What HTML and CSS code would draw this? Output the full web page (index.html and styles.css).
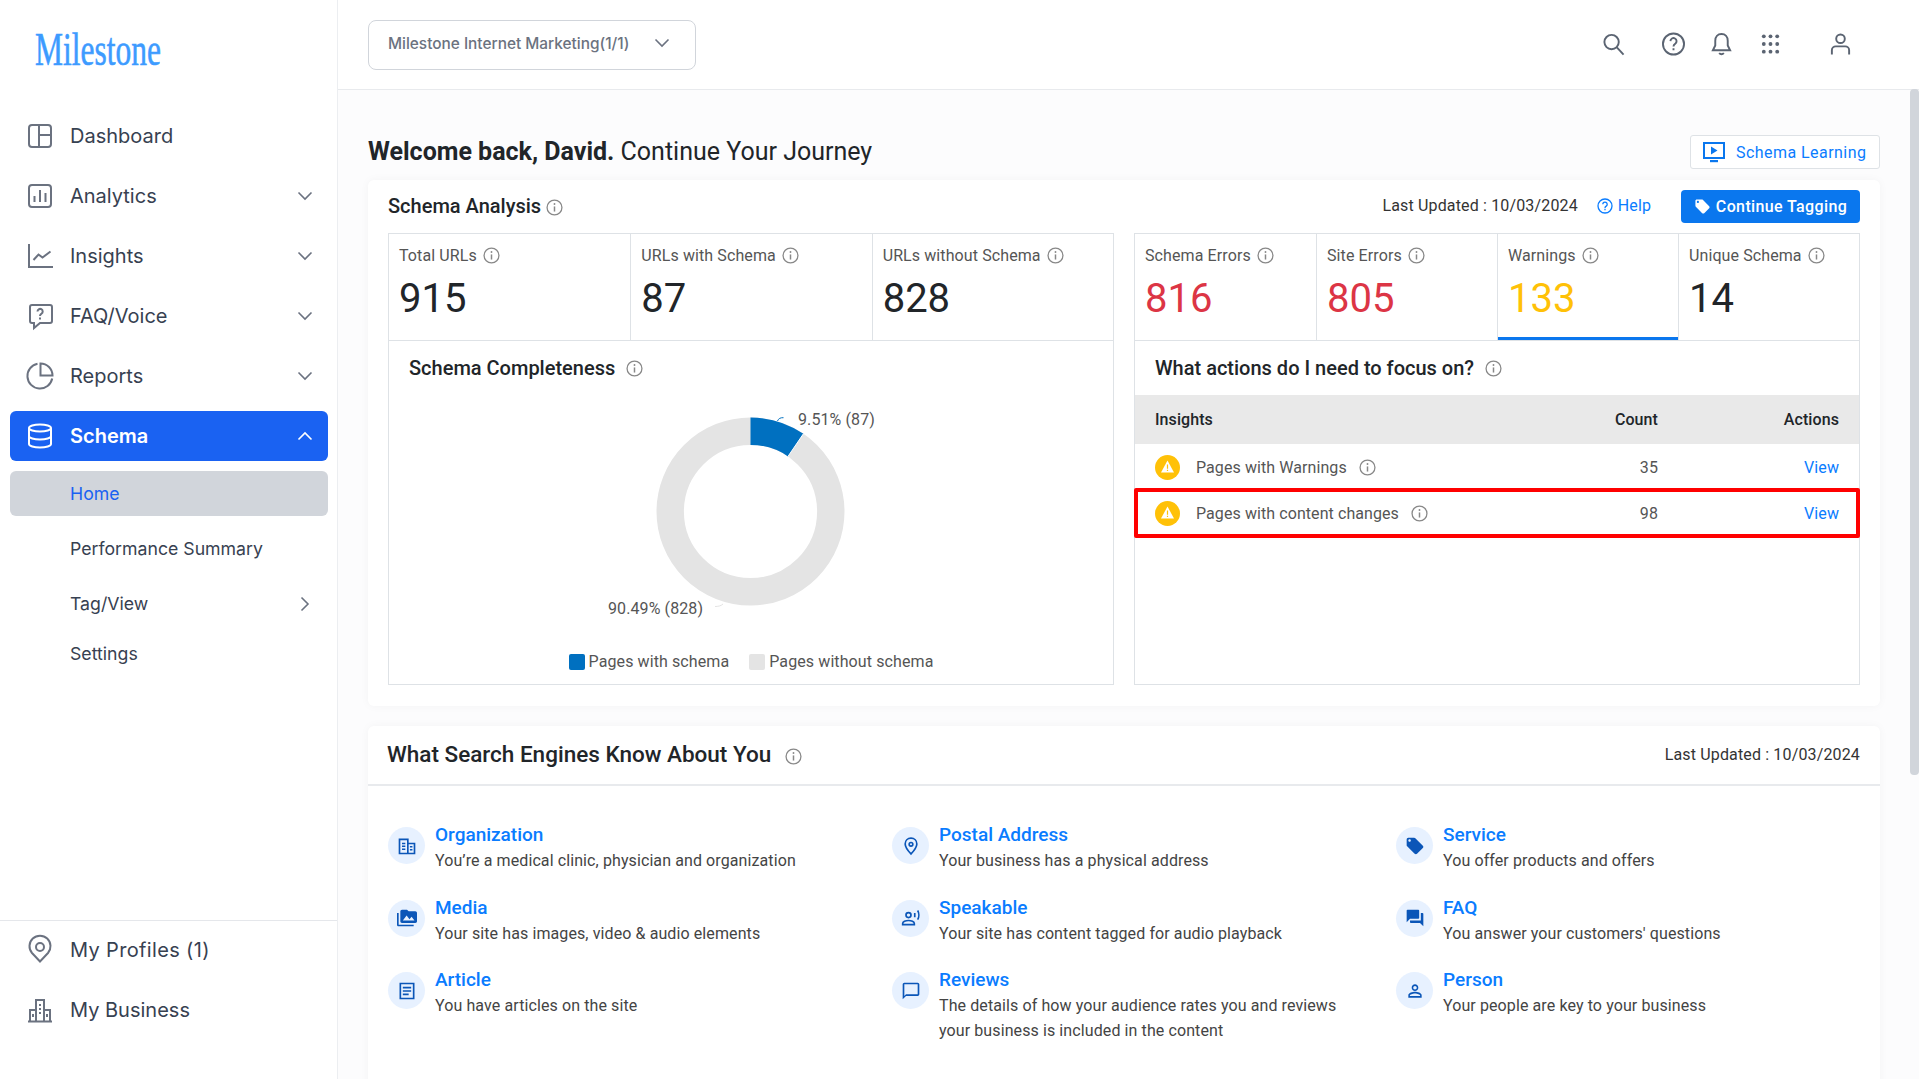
FILE: index.html
```html
<!DOCTYPE html>
<html lang="en">
<head>
    <meta charset="UTF-8">
    <meta name="viewport" content="width=device-width, initial-scale=1.0">
    <title>Milestone Schema Home</title>
    <link rel="stylesheet" href="styles.css">
</head>
<body>
    <svg class="sprite">
        <symbol id="info" viewBox="0 0 16 16">
            <circle cx="8" cy="8" r="7" fill="none" stroke="currentColor" stroke-width="1.2"/>
            <path d="M8 7v4.8" stroke="currentColor" stroke-width="1.4" fill="none"/>
            <circle cx="8" cy="4.7" r=".9" fill="currentColor"/>
        </symbol>
        <symbol id="chev" viewBox="0 0 16 16">
            <path d="M1.5 4.5 8 11l6.5-6.5" fill="none" stroke="currentColor" stroke-width="1.6"/>
        </symbol>
        <symbol id="warn" viewBox="0 0 25 25">
            <circle cx="12.5" cy="12.5" r="12.5" fill="#ffc107"/>
            <path d="M12.5 5.5 19 17.5H6z" fill="#fff"/>
            <path d="M12.5 9.5v4.2M12.5 14.8v1.3" stroke="#ffc107" stroke-width="1.2"/>
        </symbol>
        <symbol id="tag" viewBox="0 0 24 24">
            <path d="M21.41 11.58l-9-9C12.05 2.22 11.55 2 11 2H4c-1.1 0-2 .9-2 2v7c0 .55.22 1.05.59 1.42l9 9c.36.36.86.58 1.41.58.55 0 1.05-.22 1.41-.59l7-7c.37-.36.59-.86.59-1.41 0-.55-.23-1.06-.59-1.42zM5.5 7C4.67 7 4 6.33 4 5.5S4.67 4 5.5 4 7 4.67 7 5.5 6.33 7 5.5 7z" fill="currentColor"/>
        </symbol>
    </svg>

    <aside class="sidebar">
        <div class="logo"><span class="logo-text">Milestone</span></div>
        <nav class="nav">
            <a class="nav-item">
                <svg class="nav-icon" viewBox="0 0 26 26"><rect x="2" y="2" width="22" height="22" rx="3"/><path d="M12 2v22M12 12h12"/></svg>
                <span>Dashboard</span>
            </a>
            <a class="nav-item">
                <svg class="nav-icon" viewBox="0 0 26 26"><rect x="2" y="2" width="22" height="22" rx="3"/><path d="M7.5 19v-6M13 19V7M18.500 19v-9"/></svg>
                <span>Analytics</span>
                <svg class="chev"><use href="#chev"/></svg>
            </a>
            <a class="nav-item">
                <svg class="nav-icon" viewBox="0 0 26 26"><path d="M2 1v23h24M6.500 17l5-5.500 4 3 8-6"/></svg>
                <span>Insights</span>
                <svg class="chev"><use href="#chev"/></svg>
            </a>
            <a class="nav-item">
                <svg class="nav-icon" viewBox="0 0 26 26"><path d="M5 2h18a2 2 0 0 1 2 2v14a2 2 0 0 1-2 2H13l-6 5v-5H5a2 2 0 0 1-2-2V4a2 2 0 0 1 2-2z"/><path d="M10.500 8.500a2.600 2.600 0 1 1 4 2.200c-1 .6-1.500 1-1.500 2.300M13 14.500v2"/></svg>
                <span>FAQ/Voice</span>
                <svg class="chev"><use href="#chev"/></svg>
            </a>
            <a class="nav-item">
                <svg class="nav-icon nav-icon-wide" viewBox="0 0 26 26"><path d="M10.500.8A12.500 12.500 0 1 0 25.200 15.500"/><path d="M13.500.5v12h12A12 12 0 0 0 13.500.5z"/></svg>
                <span>Reports</span>
                <svg class="chev"><use href="#chev"/></svg>
            </a>
            <a class="nav-item nav-active">
                <svg class="nav-icon" viewBox="0 0 26 26"><ellipse cx="13" cy="5" rx="11" ry="3.500"/><path d="M2 5v16c0 2 5 3.500 11 3.500S24 23 24 21V5M2 13c0 2 5 3.500 11 3.500S24 15 24 13"/></svg>
                <span>Schema</span>
                <svg class="chev chev-up"><use href="#chev"/></svg>
            </a>
            <a class="sub-item sub-active">Home</a>
            <a class="sub-item">Performance Summary</a>
            <a class="sub-item sub-tight">Tag/View
                <svg class="chev chev-right"><use href="#chev"/></svg>
            </a>
            <a class="sub-item">Settings</a>
        </nav>
        <div class="nav-foot">
            <a class="nav-item">
                <svg class="nav-icon" viewBox="0 0 26 26"><path d="M13 24.500 5 16A10.500 10.500 0 1 1 21 16z"/><circle cx="13" cy="10" r="4"/></svg>
                <span class="spaced">My Profiles (1)</span>
            </a>
            <a class="nav-item">
                <svg class="nav-icon" viewBox="0 0 26 26"><path d="M1 24.500h24M3 24V13h6M23 24V13h-6M9 24V3h8v21M12 8h2M12 12h2M12 16h2M6 17v3M20 17v3"/></svg>
                <span>My Business</span>
            </a>
        </div>
    </aside>

    <main class="main">
        <header class="topbar">
            <div class="account-select">
                <span>Milestone Internet Marketing(1/1)</span>
                <svg class="chev"><use href="#chev"/></svg>
            </div>
            <div class="top-icons">
                <svg class="top-icon gap-after" viewBox="0 0 24 24"><circle cx="10" cy="10" r="7.500"/><path d="M15.500 15.500 22.500 23"/></svg>
                <svg class="top-icon" viewBox="0 0 24 24"><circle cx="12" cy="12" r="11"/><path d="M8.800 9a3.200 3.200 0 1 1 5 2.700c-1.200.8-1.800 1.300-1.800 2.800M12 16.500v2"/></svg>
                <svg class="top-icon" viewBox="0 0 24 24"><path d="M12 1.500c-4 0-6.500 3-6.500 7v5L3 18.500h18l-2.500-5v-5c0-4-2.500-7-6.500-7zM9.500 21.500c1.500 1.500 3.500 1.500 5 0"/></svg>
                <svg class="top-icon grid-icon gap-after-wide" viewBox="0 0 24 24">
                    <circle cx="5" cy="4" r="2"/><circle cx="12" cy="4" r="2"/><circle cx="19" cy="4" r="2"/>
                    <circle cx="5" cy="12" r="2"/><circle cx="12" cy="12" r="2"/><circle cx="19" cy="12" r="2"/>
                    <circle cx="5" cy="20" r="2"/><circle cx="12" cy="20" r="2"/><circle cx="19" cy="20" r="2"/>
                </svg>
                <svg class="top-icon" viewBox="0 0 24 24"><circle cx="12" cy="6.500" r="4.500"/><path d="M3 23v-4.500c0-2.500 2-4 4-4h10c2 0 4 1.500 4 4V23"/></svg>
            </div>
        </header>

        <div class="content">
            <div class="welcome-row">
                <h1 class="welcome"><b>Welcome back, David.</b> Continue Your Journey</h1>
                <a class="learn-btn">
                    <svg class="learn-icon" viewBox="0 0 22 22"><path d="M1 2h20v15H1z" fill="none" stroke="currentColor" stroke-width="2"/><path d="M8 5.500v8l6.500-4z" fill="currentColor"/><path d="M7 19h8v2.200H7z" fill="currentColor"/></svg>
                    Schema Learning
                </a>
            </div>

            <section class="card">
                <div class="card-head">
                    <h2 class="card-title">Schema Analysis <svg class="info"><use href="#info"/></svg></h2>
                    <span class="updated">Last Updated : 10/03/2024</span>
                    <a class="help">
                        <svg class="help-icon" viewBox="0 0 16 16"><circle cx="8" cy="8" r="7" fill="none" stroke="currentColor" stroke-width="1.300"/><path d="M5.800 6.300a2.200 2.200 0 1 1 3.400 1.800c-.8.500-1.200.9-1.200 1.800M8 10.800v1.500" fill="none" stroke="currentColor" stroke-width="1.300"/></svg>
                        Help
                    </a>
                    <a class="tag-btn"><svg class="tag-icon"><use href="#tag"/></svg>Continue Tagging</a>
                </div>

                <div class="analysis">
                    <div class="analysis-col">
                        <div class="stats">
                            <div class="stat">
                                <div class="stat-label">Total URLs <svg class="info"><use href="#info"/></svg></div>
                                <div class="stat-num">915</div>
                            </div>
                            <div class="stat">
                                <div class="stat-label">URLs with Schema <svg class="info"><use href="#info"/></svg></div>
                                <div class="stat-num">87</div>
                            </div>
                            <div class="stat">
                                <div class="stat-label">URLs without Schema <svg class="info"><use href="#info"/></svg></div>
                                <div class="stat-num">828</div>
                            </div>
                        </div>
                        <div class="panel">
                            <h3 class="panel-title panel-title-chart">Schema Completeness <svg class="info"><use href="#info"/></svg></h3>
                            <svg class="donut" viewBox="389 395 724 245">
                                <circle cx="750.500" cy="511.500" r="80.300" fill="none" stroke="#e4e4e4" stroke-width="27.400"/>
                                <path d="M750.500 417.500A94 94 0 0 1 803.400 433.800L788 456.400A66.600 66.600 0 0 0 750.500 444.900Z" fill="#0070c0"/>
                                <path d="M803.400 433.800 788 456.400" stroke="#fff" stroke-width="1"/>
                                <path d="M777.500 421c1-2.500 3-3.500 6-3.300" fill="none" stroke="#0070c0"/>
                                <path d="M715 606.500c3 0 6-.5 8-2.500" fill="none" stroke="#e4e4e4"/>
                                <text class="donut-label" x="798" y="425">9.51% (87)</text>
                                <text class="donut-label" x="608" y="614">90.49% (828)</text>
                            </svg>
                            <div class="legend">
                                <span class="legend-item"><i class="swatch swatch-blue"></i>Pages with schema</span>
                                <span class="legend-item"><i class="swatch swatch-grey"></i>Pages without schema</span>
                            </div>
                        </div>
                    </div>

                    <div class="analysis-col">
                        <div class="stats stats-four">
                            <div class="stat">
                                <div class="stat-label">Schema Errors <svg class="info"><use href="#info"/></svg></div>
                                <div class="stat-num num-red">816</div>
                            </div>
                            <div class="stat">
                                <div class="stat-label">Site Errors <svg class="info"><use href="#info"/></svg></div>
                                <div class="stat-num num-red">805</div>
                            </div>
                            <div class="stat stat-active">
                                <div class="stat-label">Warnings <svg class="info"><use href="#info"/></svg></div>
                                <div class="stat-num num-amber">133</div>
                            </div>
                            <div class="stat">
                                <div class="stat-label">Unique Schema <svg class="info"><use href="#info"/></svg></div>
                                <div class="stat-num">14</div>
                            </div>
                        </div>
                        <div class="panel">
                            <h3 class="panel-title">What actions do I need to focus on? <svg class="info"><use href="#info"/></svg></h3>
                            <div class="act-row act-head">
                                <span>Insights</span>
                                <span class="act-count">Count</span>
                                <span class="act-link-col">Actions</span>
                            </div>
                            <div class="act-row act-plain">
                                <span class="act-name"><svg class="warn"><use href="#warn"/></svg>Pages with Warnings <svg class="info"><use href="#info"/></svg></span>
                                <span class="act-count">35</span>
                                <a class="act-link-col view">View</a>
                            </div>
                            <div class="act-row act-marked">
                                <span class="act-name"><svg class="warn"><use href="#warn"/></svg>Pages with content changes <svg class="info"><use href="#info"/></svg></span>
                                <span class="act-count">98</span>
                                <a class="act-link-col view">View</a>
                            </div>
                        </div>
                    </div>
                </div>
            </section>

            <section class="card card-know">
                <div class="know-head">
                    <h2 class="know-title">What Search Engines Know About You <svg class="info"><use href="#info"/></svg></h2>
                    <span class="updated">Last Updated : 10/03/2024</span>
                </div>
                <div class="know-grid">
                    <div class="know-item">
                        <span class="know-icon"><svg viewBox="0 0 24 24"><path d="M3 4h10v17H3zM13 9h8v12h-8z" fill="none" stroke="currentColor" stroke-width="2"/><path d="M6 8h4v1.800H6zM6 11.500h4v1.800H6zM6 15h4v1.800H6zM15.500 12h3v1.800h-3zM15.500 15.500h3v1.800h-3z" fill="currentColor"/></svg></span>
                        <div><a class="know-name">Organization</a><p class="know-desc">You’re a medical clinic, physician and organization</p></div>
                    </div>
                    <div class="know-item">
                        <span class="know-icon"><svg viewBox="0 0 24 24"><circle cx="12" cy="10" r="2.200" fill="none" stroke="currentColor" stroke-width="2"/><path d="M12 2.500c-4 0-7 3-7 7 0 4.500 7 12 7 12s7-7.500 7-12c0-4-3-7-7-7z" fill="none" stroke="currentColor" stroke-width="2"/></svg></span>
                        <div><a class="know-name">Postal Address</a><p class="know-desc">Your business has a physical address</p></div>
                    </div>
                    <div class="know-item">
                        <span class="know-icon"><svg><use href="#tag"/></svg></span>
                        <div><a class="know-name">Service</a><p class="know-desc">You offer products and offers</p></div>
                    </div>

                    <div class="know-item">
                        <span class="know-icon"><svg viewBox="0 0 24 24"><path d="M2 6H0v5h.01L0 20c0 1.100.9 2 2 2h18v-2H2V6zm20-2h-8l-2-2H6c-1.100 0-1.990.9-1.990 2L4 16c0 1.100.9 2 2 2h16c1.100 0 2-.9 2-2V6c0-1.100-.9-2-2-2zM7 15l4.500-6 3.500 4.510 2.500-3.010L21 15H7z" fill="currentColor"/></svg></span>
                        <div><a class="know-name">Media</a><p class="know-desc">Your site has images, video &amp; audio elements</p></div>
                    </div>
                    <div class="know-item">
                        <span class="know-icon"><svg viewBox="0 0 24 24"><circle cx="9" cy="8.500" r="3" fill="none" stroke="currentColor" stroke-width="2"/><path d="M2 20v-1.500c0-2 3.500-3.500 7-3.500s7 1.500 7 3.500V20z" fill="none" stroke="currentColor" stroke-width="2"/><path d="M16.500 6v5M20 3c1.800 3 1.800 8 0 11" fill="none" stroke="currentColor" stroke-width="2"/></svg></span>
                        <div><a class="know-name">Speakable</a><p class="know-desc">Your site has content tagged for audio playback</p></div>
                    </div>
                    <div class="know-item">
                        <span class="know-icon"><svg viewBox="0 0 24 24"><path d="M21 6h-2v9H6v2c0 .55.45 1 1 1h11l4 4V7c0-.55-.45-1-1-1zm-4 6V3c0-.55-.45-1-1-1H3c-.55 0-1 .45-1 1v14l4-4h10c.55 0 1-.45 1-1z" fill="currentColor"/></svg></span>
                        <div><a class="know-name">FAQ</a><p class="know-desc">You answer your customers' questions</p></div>
                    </div>

                    <div class="know-item">
                        <span class="know-icon"><svg viewBox="0 0 24 24"><path d="M4 3h16v18H4z" fill="none" stroke="currentColor" stroke-width="2"/><path d="M7 7h10v2H7zM7 11h10v2H7zM7 15h7v2H7z" fill="currentColor"/></svg></span>
                        <div><a class="know-name">Article</a><p class="know-desc">You have articles on the site</p></div>
                    </div>
                    <div class="know-item">
                        <span class="know-icon"><svg viewBox="0 0 24 24"><path d="M20 2H4c-1.100 0-2 .9-2 2v18l4-4h14c1.100 0 2-.9 2-2V4c0-1.100-.9-2-2-2zm0 14H6l-2 2V4h16v12z" fill="currentColor"/></svg></span>
                        <div><a class="know-name">Reviews</a><p class="know-desc">The details of how your audience rates you and reviews your business is included in the content</p></div>
                    </div>
                    <div class="know-item">
                        <span class="know-icon"><svg viewBox="0 0 24 24"><path d="M12 5.900c1.160 0 2.100.94 2.100 2.100s-.94 2.100-2.100 2.100S9.900 9.160 9.900 8s.94-2.100 2.100-2.100m0 9c2.970 0 6.100 1.460 6.100 2.100v1.100H5.900V17c0-.64 3.130-2.100 6.100-2.100M12 4C9.790 4 8 5.790 8 8s1.790 4 4 4 4-1.790 4-4-1.790-4-4-4zm0 9c-2.670 0-8 1.340-8 4v3h16v-3c0-2.660-5.330-4-8-4z" fill="currentColor"/></svg></span>
                        <div><a class="know-name">Person</a><p class="know-desc">Your people are key to your business</p></div>
                    </div>
                </div>
            </section>
        </div>
        <div class="scroll-thumb"></div>
    </main>
</body>
</html>
```

FILE: styles.css
```css
* {
    box-sizing: border-box;
}
html, body {
    height: 100%;
}
body {
    margin: 0;
    display: flex;
    overflow: hidden;
    background: #fff;
    font-family: Roboto, "Liberation Sans", sans-serif;
    color: #212529;
}
h1, h2, h3, p {
    margin: 0;
    font-weight: inherit;
}
.sprite {
    display: none;
}

/* sidebar */
.sidebar {
    width: 338px;
    flex: none;
    display: flex;
    flex-direction: column;
    border-right: 1px solid #eceef1;
    font-family: Inter, "Liberation Sans", sans-serif;
}
.logo {
    height: 111px;
    padding: 22px 0 0 35px;
}
.logo-text {
    display: inline-block;
    font-family: "Liberation Serif", serif;
    font-size: 47px;
    line-height: 54px;
    color: #3d9bff;
    -webkit-text-stroke: .6px #3d9bff;
    transform: scaleX(.67);
    transform-origin: left center;
}
.nav {
    padding: 0 9px 0 10px;
}
.nav-item {
    display: flex;
    align-items: center;
    height: 50px;
    margin-bottom: 10px;
    padding: 0 15px 0 17px;
    border-radius: 6px;
    font-size: 20px;
    color: #374151;
}
.nav-icon {
    width: 26px;
    height: 26px;
    margin-right: 17px;
    flex: none;
    overflow: visible;
    fill: none;
    stroke: #6b7280;
    stroke-width: 2;
}
.chev {
    width: 16px;
    height: 16px;
    margin-left: auto;
    color: #6b7280;
}
.chev-up {
    color: #fff;
    transform: rotate(180deg);
}
.chev-right {
    transform: rotate(-90deg);
}
.spaced {
    letter-spacing: .35px;
}
.nav-active {
    background: #1a62f2;
    color: #fff;
    font-weight: 600;
}
.nav-active .nav-icon {
    stroke: #fff;
}
.sub-item {
    display: flex;
    align-items: center;
    height: 45px;
    margin-bottom: 10px;
    padding: 0 15px 0 60px;
    border-radius: 6px;
    font-size: 17.7px;
    color: #374151;
}
.sub-tight {
    margin-bottom: 5px;
}
.sub-active {
    background: #d1d5db;
    color: #1a62f2;
}
.nav-foot {
    margin-top: auto;
    padding: 4px 9px 34px 10px;
    border-top: 1px solid #e5e7eb;
}

/* top bar */
.main {
    flex: 1;
    min-width: 0;
    position: relative;
    display: flex;
    flex-direction: column;
}
.topbar {
    height: 90px;
    flex: none;
    display: flex;
    align-items: center;
    padding: 0 67px 0 30px;
    border-bottom: 1px solid #e8eaed;
}
.account-select {
    width: 328px;
    height: 50px;
    display: flex;
    align-items: center;
    padding: 0 25px 3px 19px;
    border: 1px solid #d1d5db;
    border-radius: 8px;
    font-family: Inter, "Liberation Sans", sans-serif;
    font-size: 15.4px;
    font-weight: 500;
    color: #6b7280;
}
.top-icons {
    margin: -2px 0 0 auto;
    display: flex;
    gap: 25px;
}
.top-icon {
    width: 23px;
    height: 24px;
    fill: none;
    stroke: #5b6472;
    stroke-width: 2;
}
.grid-icon {
    stroke: none;
    fill: #5b6472;
    margin-left: 1px;
}
.gap-after {
    margin-right: 12px;
}
.gap-after-wide {
    margin-right: 22px;
}

/* content */
.content {
    flex: 1;
    padding: 45px 39px 0 30px;
    background: #fcfcfd;
}
.welcome-row {
    display: flex;
    align-items: center;
    justify-content: space-between;
    height: 34px;
    margin-bottom: 11px;
}
.welcome {
    margin-top: -2px;
    font-size: 25px;
    color: #212529;
}
.welcome b {
    font-weight: 700;
}
.learn-btn {
    width: 190px;
    height: 34px;
    display: flex;
    align-items: center;
    gap: 11px;
    padding-left: 12px;
    background: #fff;
    border: 1px solid #dee2e6;
    border-radius: 3px;
    font-size: 16px;
    letter-spacing: .45px;
    color: #0a7cff;
}
.learn-icon {
    width: 22px;
    height: 22px;
    color: #0a77ee;
}
.info {
    width: 17px;
    height: 17px;
    margin-left: 2px;
    vertical-align: -3px;
    color: #888;
}
.card-title .info {
    margin-left: 0;
}
.card {
    padding: 10px 20px 21px;
    margin-bottom: 20px;
    background: #fff;
    border-radius: 6px;
    box-shadow: 0 0 10px rgba(0,0,0,.04);
}
.card-head {
    display: flex;
    align-items: center;
    height: 33px;
    margin-bottom: 10px;
}
.card-title {
    margin: -2px auto 0 0;
    font-size: 20px;
    font-weight: 500;
}
.updated {
    margin-top: -2px;
    font-size: 16px;
    letter-spacing: .15px;
    color: #333;
}
.help {
    display: flex;
    align-items: center;
    gap: 5px;
    margin: -2px 30px 0 19px;
    font-size: 16px;
    letter-spacing: .1px;
    color: #0a7cff;
}
.help-icon {
    width: 16px;
    height: 16px;
}
.tag-btn {
    width: 179px;
    height: 33px;
    display: flex;
    align-items: center;
    justify-content: center;
    gap: 5px;
    background: #0a77ee;
    border-radius: 4px;
    font-size: 16px;
    font-weight: 500;
    letter-spacing: .37px;
    color: #fff;
}
.tag-icon {
    width: 17px;
    height: 17px;
    color: #fff;
}
.analysis {
    display: grid;
    grid-template-columns: 1fr 1fr;
    gap: 20px;
}
.stats {
    display: grid;
    grid-template-columns: repeat(3, 1fr);
    height: 108px;
    border: 1px solid #dee2e6;
}
.stats-four {
    grid-template-columns: repeat(4, 1fr);
}
.stat {
    padding: 12px 10px 0;
    border-left: 1px solid #dee2e6;
}
.stat:first-child {
    border-left: none;
}
.stat-active {
    box-shadow: inset 0 -3px 0 #0a77ee;
}
.stat-label {
    font-size: 16px;
    line-height: 20px;
    letter-spacing: .1px;
    color: #555;
}
.stat-num {
    margin-top: 9px;
    font-size: 40px;
    line-height: 48px;
}
.num-red {
    color: #dc3545;
}
.num-amber {
    color: #ffc107;
}
.panel {
    height: 344px;
    border: 1px solid #dee2e6;
    border-top: none;
}
.panel-title {
    height: 54px;
    padding: 0 20px;
    display: flex;
    align-items: center;
    gap: 11px;
    font-size: 20px;
    font-weight: 500;
    color: #212529;
}
.panel-title .info {
    margin-left: 0;
}
.donut {
    display: block;
    width: 100%;
    height: 245px;
}
.donut-label {
    font-family: Roboto, "Liberation Sans", sans-serif;
    font-size: 16px;
    letter-spacing: .1px;
    fill: #555;
}
.legend {
    display: flex;
    justify-content: center;
    gap: 20px;
    margin-top: 10px;
    font-size: 16px;
    line-height: 24px;
    letter-spacing: .1px;
    color: #555;
}
.legend-item {
    display: flex;
    align-items: center;
    gap: 4px;
}
.swatch {
    width: 16px;
    height: 16px;
    border-radius: 2px;
}
.swatch-blue {
    background: #0070c0;
}
.swatch-grey {
    background: #e4e4e4;
}
.act-row {
    display: grid;
    grid-template-columns: 1fr 100px 181px;
    align-items: center;
    height: 44px;
    padding: 0 20px;
    font-size: 16px;
    letter-spacing: .08px;
    color: #555;
}
.act-head {
    height: 49px;
    background: #e9e9e9;
    font-weight: 500;
    color: #212529;
}
.act-plain {
    padding-top: 2px;
}
.act-count {
    text-align: right;
}
.act-link-col {
    text-align: right;
}
.view {
    color: #0a7cff;
}
.act-name {
    display: flex;
    align-items: center;
}
.act-name .info {
    margin-left: 12px;
}
.warn {
    width: 25px;
    height: 25px;
    margin-right: 16px;
}
.act-marked {
    height: 50px;
    margin: 0 -1px;
    padding: 0 21px;
    outline: 4px solid #f00;
    outline-offset: -4px;
    border-radius: 2px;
}
.card-know {
    height: 400px;
    padding: 0;
    margin: 0;
}
.know-head {
    height: 60px;
    display: flex;
    align-items: center;
    justify-content: space-between;
    padding: 0 20px 2px 19px;
    border-bottom: 2px solid #e8eaed;
}
.know-title {
    font-size: 22.5px;
    font-weight: 500;
}
.know-title .info {
    margin-left: 8px;
}
.know-head .updated {
    margin-top: 0;
}
.know-grid {
    display: grid;
    grid-template-columns: repeat(3, 464px);
    column-gap: 40px;
    row-gap: 24.5px;
    padding: 39px 20px 0;
}
.know-item {
    display: flex;
    gap: 10px;
}
.know-icon {
    width: 37px;
    height: 37px;
    margin-top: 2px;
    flex: none;
    display: flex;
    align-items: center;
    justify-content: center;
    background: #e7f1ff;
    border-radius: 50%;
    color: #0b56b8;
}
.know-icon svg {
    width: 20px;
    height: 20px;
}
.know-name {
    display: block;
    font-size: 19px;
    font-weight: 500;
    line-height: 19px;
    color: #0a7cff;
}
.know-desc {
    margin-top: 4px;
    font-size: 16px;
    line-height: 25px;
    letter-spacing: .1px;
    color: #444;
}
.scroll-thumb {
    position: absolute;
    top: 89px;
    right: 0;
    width: 9px;
    height: 686px;
    background: #d1d5db;
    border-radius: 4px;
}
```
